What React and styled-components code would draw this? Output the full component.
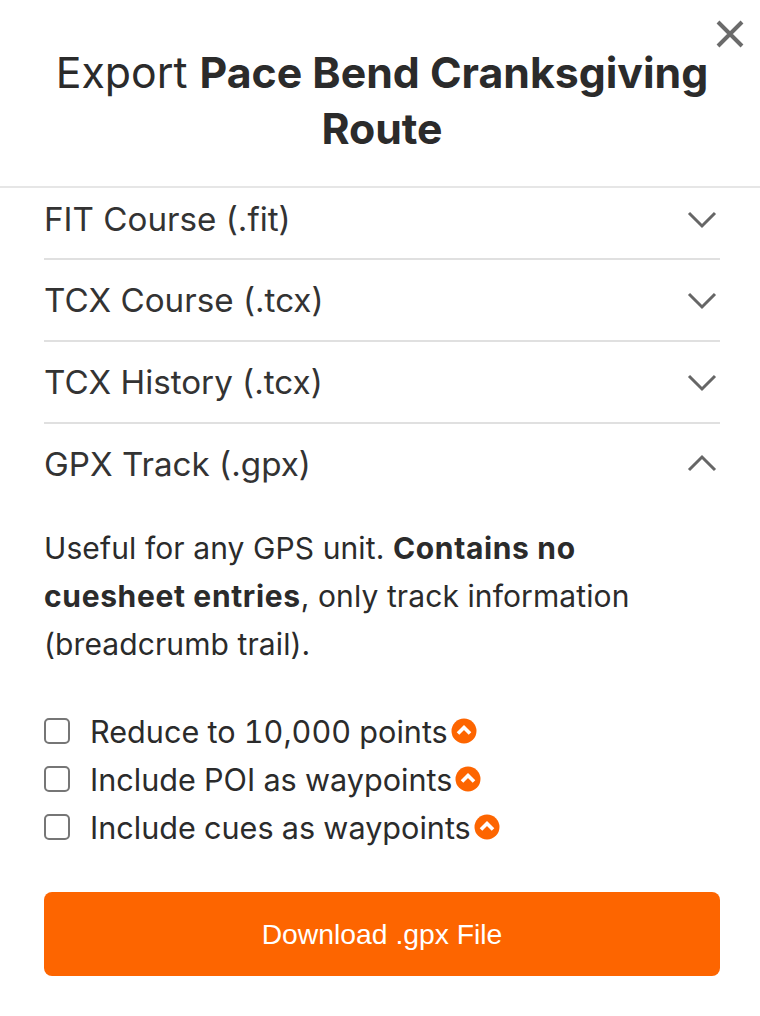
import React from 'react';
import styled, { createGlobalStyle } from 'styled-components';

const GlobalStyle = createGlobalStyle`
  html, body {
    margin: 0;
    padding: 0;
    background: #fff;
  }
  body {
    font-family: Inter, "Liberation Sans", sans-serif;
    color: #2b2b2b;
  }
`;

const Modal = styled.div`
  position: relative;
  width: 760px;
  height: 1016px;
  overflow: hidden;
  background: #fff;
`;

const CloseButton = styled.button`
  position: absolute;
  top: 20px;
  right: 16px;
  width: 28px;
  height: 28px;
  padding: 0;
  border: 0;
  background: none;
  svg {
    display: block;
  }
`;

const Header = styled.header`
  box-sizing: border-box;
  height: 188px;
  padding: 45px 40px 0 44px;
  border-bottom: 2px solid #e6e6e6;
  text-align: center;
`;

const Title = styled.h1`
  margin: 0;
  font-size: 42.8px;
  line-height: 56px;
  font-weight: 400;
  strong {
    font-weight: 700;
  }
`;

const Body = styled.div`
  padding: 0 40px 0 44px;
`;

const Row = styled.div`
  box-sizing: border-box;
  display: flex;
  align-items: center;
  justify-content: space-between;
  height: ${(p) => (p.$clipped ? '72px' : p.$open ? '80px' : '82px')};
  padding-right: 3px;
  padding-bottom: ${(p) => (p.$clipped ? '8px' : '0')};
  border-bottom: ${(p) => (p.$open ? '0' : '2px solid #e0e0e0')};
  font-size: 33.2px;
`;

const RowLabel = styled.span`
  color: #333;
`;

const Chevron = styled.svg`
  width: 30px;
  height: 20px;
  fill: none;
  stroke: #666;
  stroke-width: 3;
`;

const Description = styled.p`
  margin: 20px 0 0;
  width: 640px;
  font-size: 30px;
  line-height: 48px;
  letter-spacing: 0.1px;
  strong {
    font-weight: 700;
    letter-spacing: 0.65px;
  }
`;

const Options = styled.div`
  display: flex;
  flex-direction: column;
  margin-top: 39px;
`;

const OptionRow = styled.label`
  display: flex;
  align-items: center;
  height: 48px;
  font-size: 30.6px;
  font-variant-numeric: tabular-nums;
`;

const Box = styled.span`
  box-sizing: border-box;
  flex: none;
  width: 26px;
  height: 26px;
  margin-right: 20px;
  border: 2px solid #767676;
  border-radius: 5px;
  background: #fff;
`;

const Hint = styled.svg`
  flex: none;
  width: 26px;
  height: 26px;
  margin-left: 3px;
`;

const DownloadButton = styled.button`
  display: block;
  width: 676px;
  height: 84px;
  margin-top: 41px;
  border: 0;
  border-radius: 8px;
  background: #fd6500;
  color: #fff;
  font-family: "Liberation Sans", Arial, sans-serif;
  font-size: 28.3px;
`;

const formats = ['FIT Course (.fit)', 'TCX Course (.tcx)', 'TCX History (.tcx)'];
const options = ['Reduce to 10,000 points', 'Include POI as waypoints', 'Include cues as waypoints'];

const App = () => (
  <Modal>
    <GlobalStyle />
    <CloseButton aria-label="Close">
      <svg width="28" height="28" viewBox="0 0 28 28" fill="none" stroke="#6b6b6b" strokeWidth="4">
        <path d="M2 2 L26 26 M26 2 L2 26" />
      </svg>
    </CloseButton>
    <Header>
      <Title>
        Export <strong>Pace Bend Cranksgiving Route</strong>
      </Title>
    </Header>
    <Body>
      {formats.map((name, i) => (
        <Row key={name} $clipped={i === 0}>
          <RowLabel>{name}</RowLabel>
          <Chevron viewBox="0 0 30 20">
            <path d="M2 4 L15 17 L28 4" />
          </Chevron>
        </Row>
      ))}
      <Row $open>
        <RowLabel>GPX Track (.gpx)</RowLabel>
        <Chevron viewBox="0 0 30 20">
          <path d="M2 16 L15 3 L28 16" />
        </Chevron>
      </Row>
      <Description>
        Useful for any GPS unit. <strong>Contains no cuesheet entries</strong>, only track information (breadcrumb trail).
      </Description>
      <Options>
        {options.map((label) => (
          <OptionRow key={label}>
            <Box />
            {label}
            <Hint viewBox="0 0 26 26">
              <circle cx="13" cy="13" r="12.5" fill="#fd6500" />
              <path d="M7 15.5 L13 9.5 L19 15.5" fill="none" stroke="#fff" strokeWidth="3.6" />
            </Hint>
          </OptionRow>
        ))}
      </Options>
      <DownloadButton>Download .gpx File</DownloadButton>
    </Body>
  </Modal>
);

export default App;
